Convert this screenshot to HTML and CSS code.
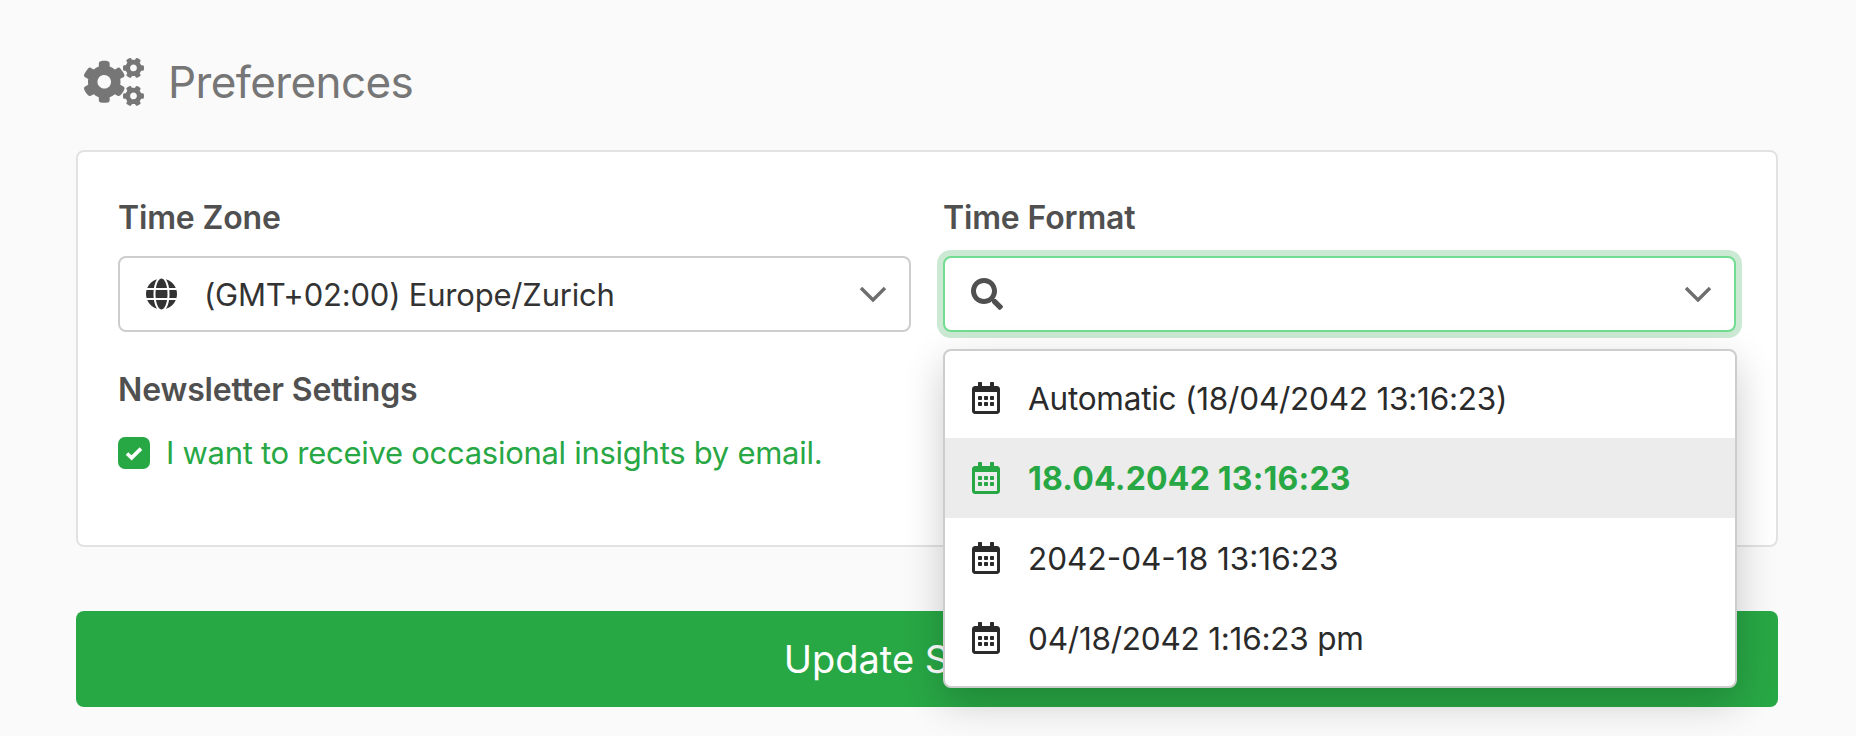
FILE: index.html
```html
<!DOCTYPE html>
<html lang="en">
<head>
<meta charset="utf-8">
<title>Preferences</title>
<link rel="stylesheet" href="styles.css">
</head>
<body>
<svg class="defs" width="0" height="0" aria-hidden="true">
  <symbol id="cal" viewBox="0 0 448 512"><path d="M148 288h-40c-6.6 0-12-5.4-12-12v-40c0-6.6 5.4-12 12-12h40c6.6 0 12 5.4 12 12v40c0 6.6-5.4 12-12 12zm108-12v-40c0-6.6-5.4-12-12-12h-40c-6.6 0-12 5.4-12 12v40c0 6.6 5.4 12 12 12h40c6.6 0 12-5.4 12-12zm96 0v-40c0-6.6-5.4-12-12-12h-40c-6.6 0-12 5.4-12 12v40c0 6.6 5.4 12 12 12h40c6.6 0 12-5.4 12-12zm-96 96v-40c0-6.6-5.4-12-12-12h-40c-6.6 0-12 5.4-12 12v40c0 6.6 5.4 12 12 12h40c6.6 0 12-5.4 12-12zm-96 0v-40c0-6.6-5.4-12-12-12h-40c-6.6 0-12 5.4-12 12v40c0 6.6 5.4 12 12 12h40c6.6 0 12-5.4 12-12zm192 0v-40c0-6.6-5.4-12-12-12h-40c-6.6 0-12 5.4-12 12v40c0 6.6 5.4 12 12 12h40c6.6 0 12-5.4 12-12zm96-260v352c0 26.5-21.5 48-48 48H48c-26.5 0-48-21.5-48-48V112c0-26.5 21.5-48 48-48h48V12c0-6.6 5.4-12 12-12h40c6.6 0 12 5.4 12 12v52h128V12c0-6.6 5.4-12 12-12h40c6.6 0 12 5.4 12 12v52h48c26.5 0 48 21.5 48 48zm-48 346V160H48v298c0 3.3 2.7 6 6 6h340c3.3 0 6-2.7 6-6z"/></symbol>
  <symbol id="chev" viewBox="0 0 28 16"><path d="M2 2l12 12L26 2" fill="none" stroke="currentColor" stroke-width="3.4"/></symbol>
</svg>
<main class="page">
  <h1 class="title">
    <svg class="icon-cogs" viewBox="0 0 640 512"><path d="M512.1 191l-8.2 14.3c-3 5.3-9.4 7.5-15.1 5.4-11.8-4.4-22.6-10.7-32.1-18.6-4.6-3.8-5.8-10.5-2.8-15.7l8.2-14.3c-6.9-8-12.3-17.3-15.9-27.4h-16.5c-6 0-11.2-4.3-12.2-10.3-2-12-2.1-24.6 0-37.1 1-6 6.2-10.4 12.2-10.4h16.5c3.6-10.1 9-19.4 15.9-27.4l-8.2-14.3c-3-5.2-1.9-11.9 2.8-15.7 9.5-7.9 20.4-14.2 32.1-18.6 5.7-2.1 12.1.1 15.1 5.4l8.2 14.3c10.5-1.9 21.2-1.9 31.7 0L552 6.3c3-5.3 9.4-7.5 15.1-5.4 11.8 4.4 22.6 10.7 32.1 18.6 4.6 3.8 5.8 10.5 2.8 15.7l-8.2 14.3c6.9 8 12.3 17.3 15.9 27.4h16.5c6 0 11.2 4.3 12.2 10.3 2 12 2.1 24.6 0 37.1-1 6-6.2 10.4-12.2 10.4h-16.5c-3.6 10.1-9 19.4-15.9 27.4l8.2 14.3c3 5.2 1.9 11.9-2.8 15.7-9.5 7.9-20.4 14.2-32.1 18.6-5.7 2.1-12.1-.1-15.1-5.4l-8.2-14.3c-10.4 1.9-21.2 1.9-31.7 0zm-10.5-58.8c38.5 29.6 82.4-14.3 52.8-52.8-38.5-29.7-82.4 14.3-52.8 52.8zM386.3 286.1l33.7 16.8c10.1 5.8 14.5 18.1 10.5 29.1-8.9 24.2-26.4 46.4-42.6 65.8-7.4 8.9-20.2 11.1-30.3 5.3l-29.1-16.8c-16 13.7-34.6 24.6-54.9 31.7v33.6c0 11.6-8.3 21.6-19.7 23.6-24.6 4.2-50.4 4.4-75.9 0-11.5-2-20-11.9-20-23.6V418c-20.3-7.2-38.9-18-54.9-31.7L74 403c-10 5.8-22.9 3.6-30.3-5.3-16.2-19.4-33.3-41.6-42.2-65.7-4-10.9.4-23.2 10.5-29.1l33.3-16.8c-3.9-20.9-3.9-42.4 0-63.4L12 205.8c-10.1-5.8-14.6-18.1-10.5-29 8.9-24.2 26-46.4 42.2-65.8 7.4-8.9 20.2-11.1 30.3-5.3l29.1 16.8c16-13.7 34.6-24.6 54.9-31.7V57.1c0-11.5 8.2-21.5 19.6-23.5 24.6-4.2 50.5-4.4 76-.1 11.5 2 20 11.9 20 23.6v33.6c20.3 7.2 38.9 18 54.9 31.7l29.1-16.8c10-5.8 22.9-3.6 30.3 5.3 16.2 19.4 33.2 41.6 42.1 65.8 4 10.9.1 23.2-10 29.1l-33.7 16.8c3.9 21 3.9 42.5 0 63.5zm-117.6 21.1c59.2-77-28.7-164.9-105.7-105.7-59.2 77 28.7 164.9 105.7 105.7zm243.4 182.7l-8.2 14.3c-3 5.3-9.4 7.5-15.1 5.4-11.8-4.4-22.6-10.7-32.1-18.6-4.6-3.8-5.8-10.5-2.8-15.7l8.2-14.3c-6.9-8-12.3-17.3-15.9-27.4h-16.5c-6 0-11.2-4.3-12.2-10.3-2-12-2.1-24.6 0-37.1 1-6 6.2-10.4 12.2-10.4h16.5c3.6-10.1 9-19.4 15.9-27.4l-8.2-14.3c-3-5.2-1.9-11.9 2.8-15.7 9.5-7.9 20.4-14.2 32.1-18.6 5.7-2.1 12.1.1 15.1 5.4l8.2 14.3c10.5-1.9 21.2-1.9 31.7 0l8.2-14.3c3-5.3 9.4-7.5 15.1-5.4 11.8 4.4 22.6 10.7 32.1 18.6 4.6 3.8 5.8 10.5 2.8 15.7l-8.2 14.3c6.9 8 12.3 17.3 15.9 27.4h16.5c6 0 11.2 4.3 12.2 10.3 2 12 2.1 24.6 0 37.1-1 6-6.2 10.4-12.2 10.4h-16.5c-3.6 10.1-9 19.4-15.9 27.4l8.2 14.3c3 5.2 1.9 11.9-2.8 15.7-9.5 7.9-20.4 14.2-32.1 18.6-5.7 2.1-12.1-.1-15.1-5.4l-8.2-14.3c-10.4 1.9-21.2 1.9-31.7 0zM501.6 431c38.5 29.6 82.4-14.3 52.8-52.8-38.5-29.6-82.4 14.3-52.8 52.8z"/></svg>
    <span>Preferences</span>
  </h1>
  <section class="card">
    <div class="cols">
      <div class="col">
        <div class="label">Time Zone</div>
        <div class="select">
          <svg class="icon-globe" viewBox="0 0 496 512"><path d="M336.5 160C322 70.7 287.8 8 248 8s-74 62.7-88.5 152h177zM152 256c0 22.2 1.2 43.5 3.3 64h185.3c2.1-20.5 3.3-41.8 3.3-64s-1.2-43.5-3.3-64H155.3c-2.1 20.5-3.3 41.8-3.3 64zm324.7-96c-28.6-67.9-86.5-120.4-158-141.6 24.4 33.8 41.2 84.7 50 141.6h108zM177.2 18.4C105.8 39.6 47.8 92.1 19.3 160h108c8.7-56.9 25.5-107.8 49.9-141.6zM487.4 192H372.7c2.1 21 3.3 42.5 3.3 64s-1.2 43-3.3 64h114.6c5.5-20.5 8.6-41.8 8.6-64s-3.1-43.5-8.5-64zM120 256c0-21.5 1.2-43 3.3-64H8.6C3.2 212.5 0 233.8 0 256s3.2 43.5 8.6 64h114.6c-2-21-3.2-42.5-3.2-64zm39.5 96c14.5 89.3 48.7 152 88.5 152s74-62.7 88.5-152h-177zm159.3 141.6c71.4-21.2 129.4-73.7 158-141.6h-108c-8.8 56.9-25.6 107.8-50 141.6zM19.3 352c28.6 67.9 86.5 120.4 158 141.6-24.4-33.8-41.2-84.7-50-141.6h-108z"/></svg>
          <span class="value">(GMT+02:00) Europe/Zurich</span>
          <svg class="chev"><use href="#chev"/></svg>
        </div>
        <div class="label label-news">Newsletter Settings</div>
        <label class="check">
          <span class="box"><svg viewBox="0 0 20 20"><path d="M3 10.5l4.6 4.4L17 5.6" fill="none" stroke="#fff" stroke-width="3.6"/></svg></span>
          <span>I want to receive occasional insights by email.</span>
        </label>
      </div>
      <div class="col col-format">
        <div class="label">Time Format</div>
        <div class="select select-focus">
          <svg class="icon-search" viewBox="0 0 512 512"><path d="M505 442.7L405.3 343c-4.5-4.5-10.6-7-17-7H372c27.6-35.3 44-79.7 44-128C416 93.1 322.9 0 208 0S0 93.1 0 208s93.1 208 208 208c48.3 0 92.7-16.4 128-44v16.3c0 6.4 2.5 12.5 7 17l99.7 99.7c9.4 9.4 24.6 9.4 33.9 0l28.3-28.3c9.4-9.4 9.4-24.6.1-34zM208 336c-70.7 0-128-57.2-128-128 0-70.7 57.2-128 128-128 70.7 0 128 57.2 128 128 0 70.7-57.2 128-128 128z"/></svg>
          <svg class="chev"><use href="#chev"/></svg>
        </div>
        <ul class="menu">
          <li class="item"><svg class="icon-cal"><use href="#cal"/></svg><span>Automatic (18/04/2042 13:16:23)</span></li>
          <li class="item item-active"><svg class="icon-cal"><use href="#cal"/></svg><span>18.04.2042 13:16:23</span></li>
          <li class="item item-digits"><svg class="icon-cal"><use href="#cal"/></svg><span>2042-04-18 13:16:23</span></li>
          <li class="item"><svg class="icon-cal"><use href="#cal"/></svg><span>04/18/2042 1:16:23 pm</span></li>
        </ul>
      </div>
    </div>
  </section>
  <button class="submit" type="button">Update Settings</button>
</main>
</body>
</html>
```

FILE: styles.css
```css
* { box-sizing: border-box; }
html, body { margin: 0; height: 100%; }
body {
  background: #fafafa;
  font-family: Inter, "Liberation Sans", sans-serif;
  color: #2a2a2a;
  overflow: hidden;
}
.defs { position: absolute; }
.page { padding: 0 78px 0 76px; }
.title {
  display: flex;
  align-items: center;
  gap: 24px;
  height: 150px;
  margin: 0;
  padding: 14px 0 0 8px;
  font-size: 44px;
  font-weight: 400;
  letter-spacing: -0.6px;
  color: #767676;
}
.icon-cogs { width: 60px; height: 48px; fill: #767676; }
.card {
  height: 397px;
  background: #fff;
  border: 2px solid #e2e2e2;
  border-radius: 8px;
  padding: 48px 40px 0;
}
.cols { display: grid; grid-template-columns: 793px 794px; gap: 32px; }
.col { position: relative; }
.label {
  font-size: 32px;
  line-height: 36px;
  font-weight: 600;
  letter-spacing: -0.15px;
  color: #505050;
}
.select {
  display: flex;
  align-items: center;
  height: 76px;
  margin-top: 20px;
  padding: 0 22px 0 26px;
  background: #fff;
  border: 2px solid #cdcdcd;
  border-radius: 8px;
  font-size: 31px;
  letter-spacing: -0.2px;
  color: #333;
}
.select-focus {
  margin-right: 1px;
  border-color: #72dc90;
  box-shadow: 0 0 0 6px #cbe9d3;
}
.icon-globe { width: 31px; height: 32px; fill: #333; margin-right: 27px; flex: none; }
.icon-search { width: 32px; height: 32px; fill: #505050; }
.value { flex: 1; }
.chev { width: 28px; height: 16px; margin-left: auto; color: #6e6e6e; flex: none; }
.label-news { margin-top: 40px; }
.check {
  display: flex;
  align-items: center;
  gap: 16px;
  margin-top: 27px;
  font-size: 31px;
  letter-spacing: -0.28px;
  line-height: 36px;
  color: #28a745;
}
.box {
  display: flex;
  align-items: center;
  justify-content: center;
  width: 32px;
  height: 32px;
  border-radius: 7px;
  background: #28a745;
}
.box svg { width: 20px; height: 20px; }
.menu {
  position: absolute;
  top: 149px;
  left: 0;
  right: 0;
  z-index: 5;
  margin: 0;
  padding: 0;
  list-style: none;
  height: 339px;
  background: #fff;
  border: 2px solid #cdcdcd;
  border-radius: 8px;
  box-shadow: 0 14px 40px rgba(0, 0, 0, .2);
  padding-top: 7px;
}
.item {
  display: flex;
  align-items: center;
  gap: 28px;
  height: 80px;
  padding-left: 27px;
  font-size: 31.5px;
  letter-spacing: -0.23px;
  color: #2a2a2a;
}
.item-digits { letter-spacing: 0; }
.item-active {
  background: #ececec;
  color: #28a745;
  font-size: 32px;
  letter-spacing: 0.2px;
  font-weight: 700;
}
.icon-cal { width: 28px; height: 32px; fill: currentColor; flex: none; }
.submit {
  display: block;
  width: 100%;
  height: 96px;
  margin-top: 64px;
  border: 0;
  border-radius: 8px;
  background: #28a745;
  color: #fff;
  font: 400 38px Inter, "Liberation Sans", sans-serif;
}
```
